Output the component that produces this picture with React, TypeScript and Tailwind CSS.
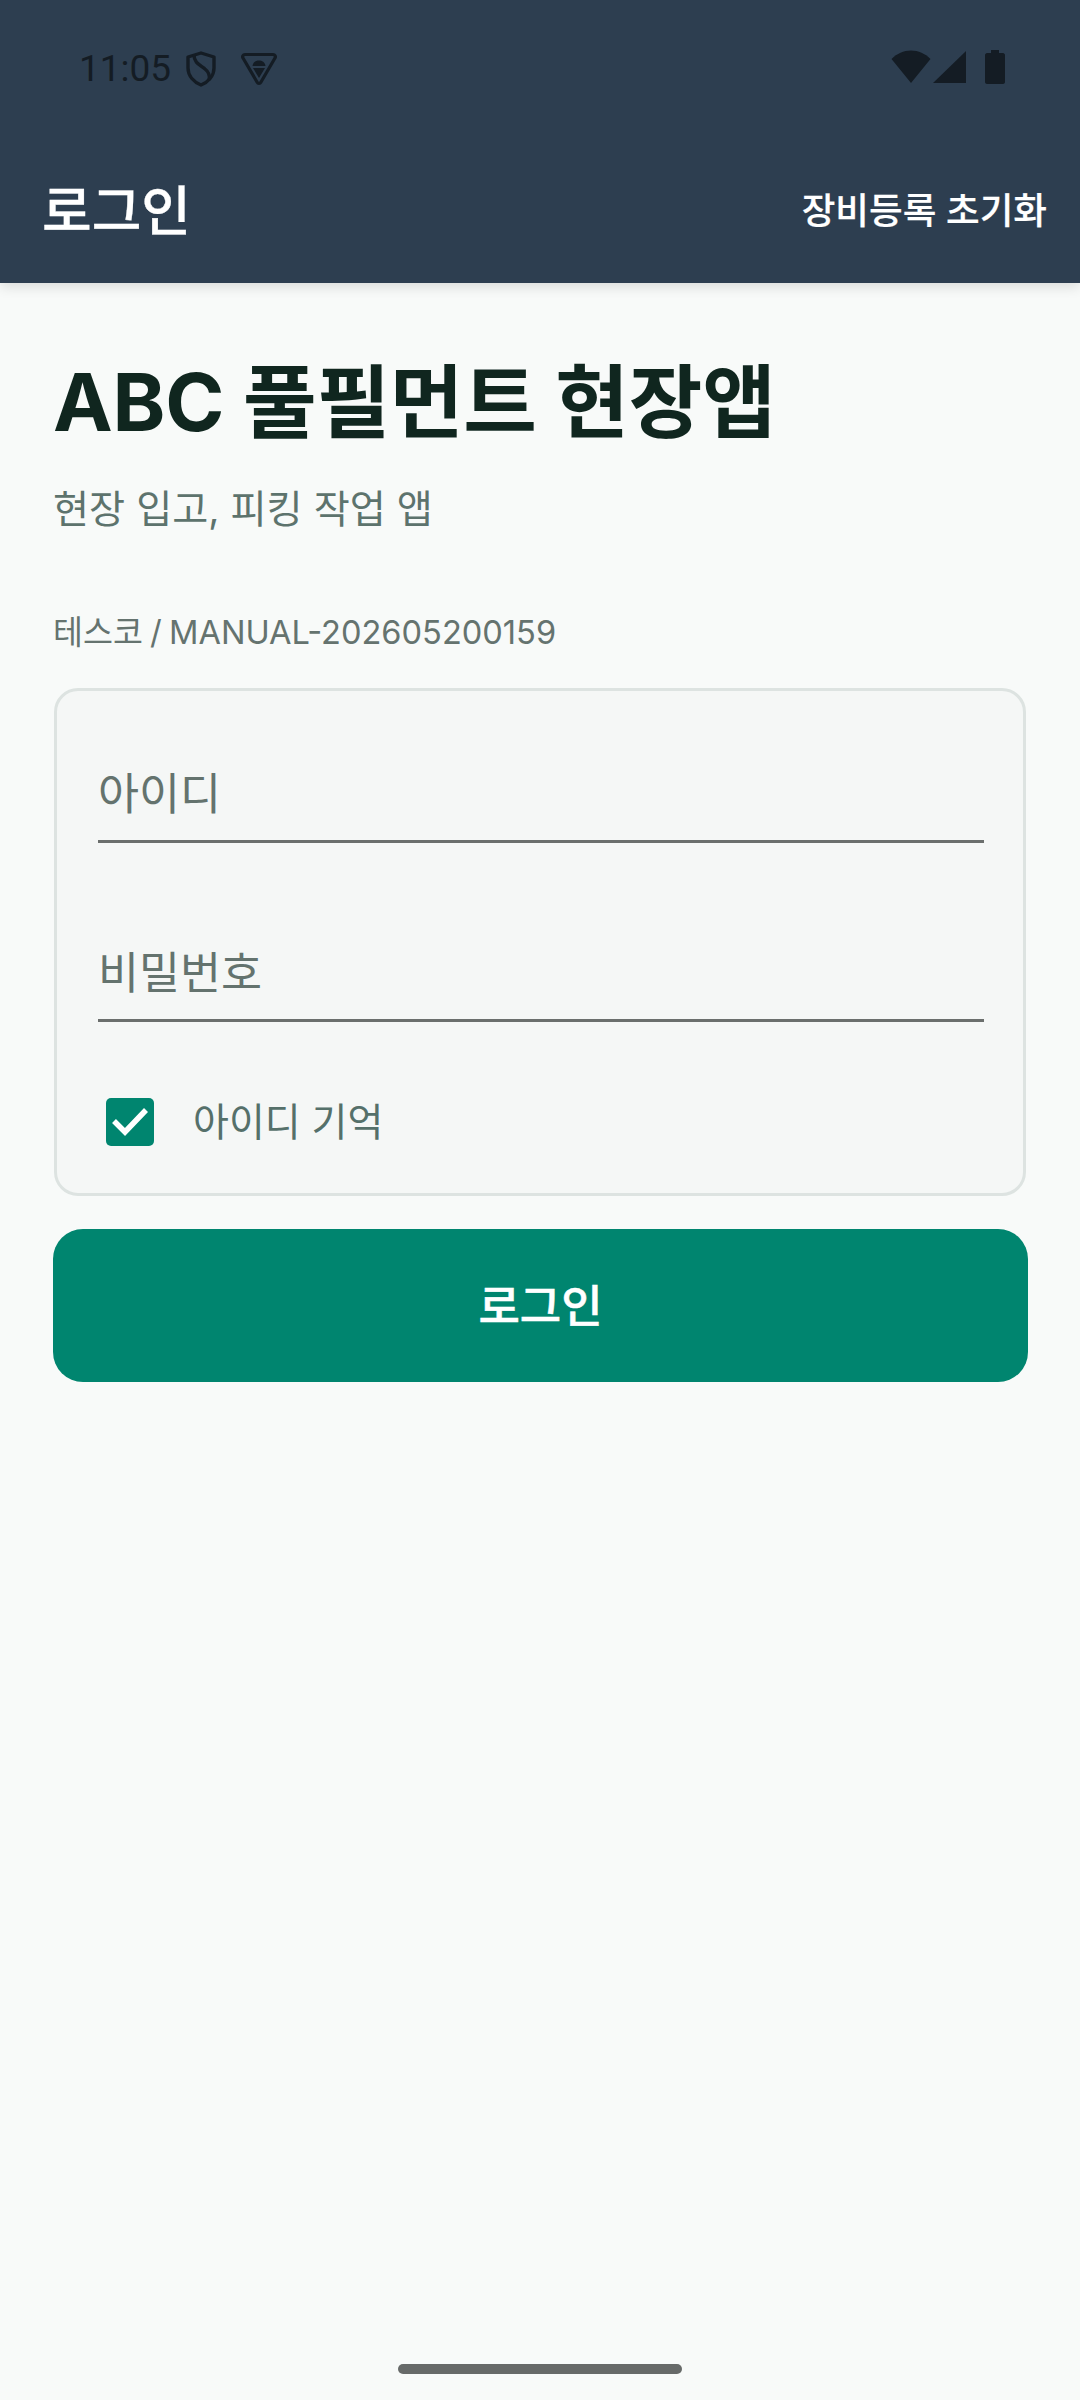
function StatusBar() {
  return (
    <div className="flex h-[130px] items-start justify-between pt-[47px] pl-[79px] pr-[75px] text-[#141c24]">
      <div className="flex items-center">
        <span className="text-[37px] leading-[44px] [font-family:Roboto,sans-serif]">11:05</span>
        <svg width="30" height="36" viewBox="0 0 30 36" fill="none" stroke="currentColor" strokeWidth="3.4" className="ml-[15px]">
          <path d="M15 2 L28 6 V17 C28 25 22 31 15 34 C8 31 2 25 2 17 V6 Z" strokeLinejoin="round" />
          <path d="M8 4 C8 12 14 14 19 18 C23 21 24 25 23 29" />
        </svg>
        <svg width="36" height="34" viewBox="0 0 36 34" fill="none" className="ml-[25px]">
          <path d="M4 2.5 H32 C34 2.5 35 4.5 34 6 L20 30 C19 32 17 32 16 30 L2 6 C1 4.5 2 2.5 4 2.5 Z" stroke="currentColor" strokeWidth="3.2" strokeLinejoin="round" />
          <path d="M11.5 14 C12 10 15 8.5 18 8.5 C21 8.5 24 10 24.5 14 Z M12 16 H24 L18 26 Z" fill="currentColor" />
        </svg>
      </div>
      <div className="flex items-center pt-[3px]">
        <svg width="40" height="34" viewBox="0 0 40 34" fill="currentColor">
          <path d="M20 33 L0.5 9 C6 3.5 12.5 0.5 20 0.5 C27.5 0.5 34 3.5 39.5 9 Z" />
        </svg>
        <svg width="34" height="33" viewBox="0 0 34 33" fill="currentColor" className="ml-[2px]">
          <path d="M33 0 V32 H0 Z" />
        </svg>
        <svg width="20" height="34" viewBox="0 0 20 34" fill="currentColor" className="ml-[18px]">
          <path d="M6 0 H14 V3 H18 C19 3 20 4 20 5 V32 C20 33 19 34 18 34 H2 C1 34 0 33 0 32 V5 C0 4 1 3 2 3 H6 Z" />
        </svg>
      </div>
    </div>
  )
}

function Field({ label }: { label: string }) {
  return (
    <div className="flex h-[116px] items-center border-b-[3px] border-[#6b6f6d] pt-[20px]">
      <span className="text-[44.6px] leading-[60px] text-[#64736e]">{label}</span>
    </div>
  )
}

function App() {
  return (
    <div className="flex h-[2400px] w-[1080px] flex-col bg-[#f8faf9]" style={{ fontFamily: 'Inter, "Noto Sans CJK KR", sans-serif' }}>
      <header className="h-[283px] bg-[#2d3e50] shadow-[0_4px_12px_rgba(0,0,0,0.12)]">
        <StatusBar />
        <div className="flex h-[153px] items-start justify-between pt-[48px] pl-[42px] pr-[33px]">
          <span className="text-[54px] font-medium leading-[68px] text-white [-webkit-text-stroke:0.3px_white]">로그인</span>
          <span className="pt-[8px] text-[36.6px] font-medium leading-[50px] text-white [-webkit-text-stroke:0.2px_white]">장비등록 초기화</span>
        </div>
      </header>

      <main className="flex flex-col px-[53px] pt-[66px]">
        <h1 className="text-[80px] font-bold leading-[106px] tracking-[-0.2px] text-[#10261f]">ABC 풀필먼트 현장앱</h1>
        <p className="mt-[28px] text-[39.2px] leading-[52px] text-[#5d736d]">현장 입고, 피킹 작업 앱</p>
        <p className="mt-[75px] text-[32.6px] leading-[44px] text-[#65736f] [word-spacing:-2px]">테스코 / MANUAL-202605200159</p>

        <section className="mt-[34px] ml-[1px] w-[972px] rounded-[24px] border-[3px] border-[#dde3e1] bg-[#f5f7f6] pl-[41px] pr-[39px] pt-[36px] pb-[20px]">
          <Field label="아이디" />
          <div className="mt-[63px]">
            <Field label="비밀번호" />
          </div>
          <div className="mt-[73px] flex items-center pl-[8px]">
            <span className="flex h-[48px] w-[48px] items-center justify-center rounded-[5px] bg-[#00856f]">
              <svg width="38" height="30" viewBox="0 0 38 30" fill="none" stroke="white" strokeWidth="5.5">
                <path d="M3 14 L14 25 L35 3" />
              </svg>
            </span>
            <span className="ml-[39px] text-[39px] leading-[54px] text-[#55706a]">아이디 기억</span>
          </div>
          <div className="h-[24px]" />
        </section>

        <button className="mt-[33px] flex h-[153px] w-[975px] items-center justify-center rounded-[30px] bg-[#00856f] pt-[2px] text-[45px] font-medium text-white [-webkit-text-stroke:0.5px_white]">
          로그인
        </button>
      </main>

      <div className="mt-auto mb-[26px] flex justify-center">
        <div className="h-[10px] w-[284px] rounded-full bg-[#676a69]" />
      </div>
    </div>
  )
}

export default App
